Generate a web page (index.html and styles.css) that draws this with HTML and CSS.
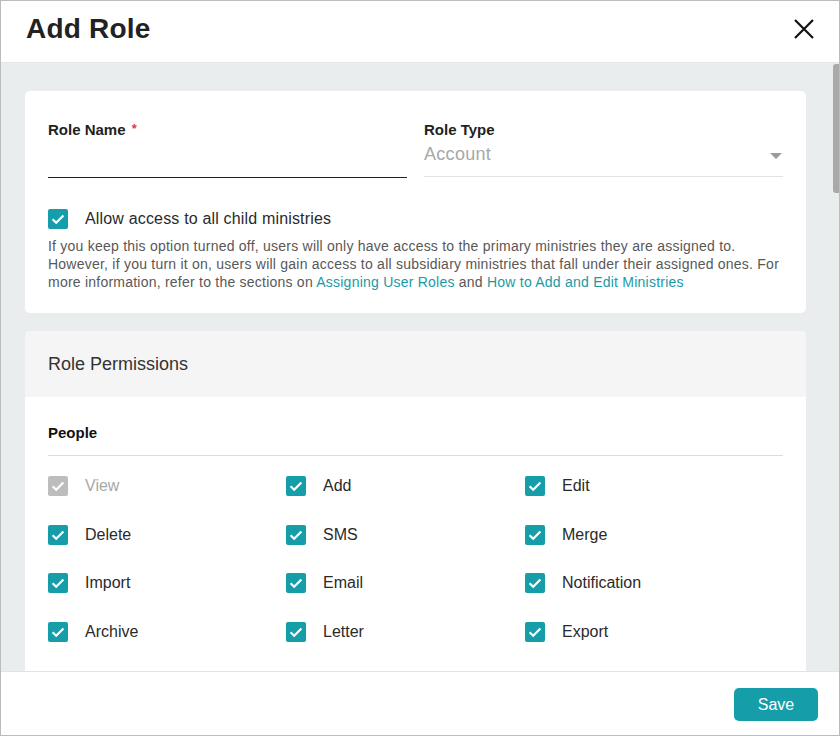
FILE: index.html
```html
<!DOCTYPE html>
<html>
<head>
<meta charset="utf-8">
<link rel="stylesheet" href="styles.css">
</head>
<body>
<div class="dialog">
  <header class="dlg-header">
    <h1 class="dlg-title">Add Role</h1>
    <button class="close-btn" aria-label="Close">
      <svg width="20" height="20" viewBox="0 0 20 20"><path d="M1 1 L19 19 M19 1 L1 19" stroke="#111" stroke-width="2.2" fill="none"/></svg>
    </button>
  </header>
  <main class="dlg-body">
    <div class="scroll-content">
      <section class="card card-role">
        <div class="field-row">
          <div class="field">
            <label class="field-label">Role Name <span class="req">*</span></label>
            <div class="field-input field-input-dark"></div>
          </div>
          <div class="field">
            <label class="field-label">Role Type</label>
            <div class="field-input field-input-light">
              <span class="select-value">Account</span>
              <span class="caret"></span>
            </div>
          </div>
        </div>
        <div class="check-row check-row-main">
          <span class="cb"><svg width="20" height="20" viewBox="0 0 20 20"><rect width="20" height="20" rx="2" fill="#159ea9"/><path d="M4.6 10.3 L8.2 13.8 L15.4 6.4" stroke="#fff" stroke-width="2.2" fill="none"/></svg></span>
          <span class="cb-label main-label">Allow access to all child ministries</span>
        </div>
        <p class="desc">If you keep this option turned off, users will only have access to the primary ministries they are assigned to. However, if you turn it on, users will gain access to all subsidiary ministries that fall under their assigned ones. For more information, refer to the sections on <a class="link">Assigning User Roles</a> and <a class="link">How to Add and Edit Ministries</a></p>
      </section>

      <section class="card card-perm">
        <div class="perm-header">Role Permissions</div>
        <div class="perm-body">
          <div class="perm-group-title">People</div>
          <div class="perm-grid">
            <div class="check-row disabled"><span class="cb"><svg width="20" height="20" viewBox="0 0 20 20"><rect width="20" height="20" rx="2" fill="#bdbdbd"/><path d="M4.6 10.3 L8.2 13.8 L15.4 6.4" stroke="#fff" stroke-width="2.2" fill="none"/></svg></span><span class="cb-label">View</span></div>
            <div class="check-row"><span class="cb"><svg width="20" height="20" viewBox="0 0 20 20"><rect width="20" height="20" rx="2" fill="#159ea9"/><path d="M4.6 10.3 L8.2 13.8 L15.4 6.4" stroke="#fff" stroke-width="2.2" fill="none"/></svg></span><span class="cb-label">Add</span></div>
            <div class="check-row"><span class="cb"><svg width="20" height="20" viewBox="0 0 20 20"><rect width="20" height="20" rx="2" fill="#159ea9"/><path d="M4.6 10.3 L8.2 13.8 L15.4 6.4" stroke="#fff" stroke-width="2.2" fill="none"/></svg></span><span class="cb-label">Edit</span></div>
            <div class="check-row"><span class="cb"><svg width="20" height="20" viewBox="0 0 20 20"><rect width="20" height="20" rx="2" fill="#159ea9"/><path d="M4.6 10.3 L8.2 13.8 L15.4 6.4" stroke="#fff" stroke-width="2.2" fill="none"/></svg></span><span class="cb-label">Delete</span></div>
            <div class="check-row"><span class="cb"><svg width="20" height="20" viewBox="0 0 20 20"><rect width="20" height="20" rx="2" fill="#159ea9"/><path d="M4.6 10.3 L8.2 13.8 L15.4 6.4" stroke="#fff" stroke-width="2.2" fill="none"/></svg></span><span class="cb-label">SMS</span></div>
            <div class="check-row"><span class="cb"><svg width="20" height="20" viewBox="0 0 20 20"><rect width="20" height="20" rx="2" fill="#159ea9"/><path d="M4.6 10.3 L8.2 13.8 L15.4 6.4" stroke="#fff" stroke-width="2.2" fill="none"/></svg></span><span class="cb-label">Merge</span></div>
            <div class="check-row"><span class="cb"><svg width="20" height="20" viewBox="0 0 20 20"><rect width="20" height="20" rx="2" fill="#159ea9"/><path d="M4.6 10.3 L8.2 13.8 L15.4 6.4" stroke="#fff" stroke-width="2.2" fill="none"/></svg></span><span class="cb-label">Import</span></div>
            <div class="check-row"><span class="cb"><svg width="20" height="20" viewBox="0 0 20 20"><rect width="20" height="20" rx="2" fill="#159ea9"/><path d="M4.6 10.3 L8.2 13.8 L15.4 6.4" stroke="#fff" stroke-width="2.2" fill="none"/></svg></span><span class="cb-label">Email</span></div>
            <div class="check-row"><span class="cb"><svg width="20" height="20" viewBox="0 0 20 20"><rect width="20" height="20" rx="2" fill="#159ea9"/><path d="M4.6 10.3 L8.2 13.8 L15.4 6.4" stroke="#fff" stroke-width="2.2" fill="none"/></svg></span><span class="cb-label">Notification</span></div>
            <div class="check-row"><span class="cb"><svg width="20" height="20" viewBox="0 0 20 20"><rect width="20" height="20" rx="2" fill="#159ea9"/><path d="M4.6 10.3 L8.2 13.8 L15.4 6.4" stroke="#fff" stroke-width="2.2" fill="none"/></svg></span><span class="cb-label">Archive</span></div>
            <div class="check-row"><span class="cb"><svg width="20" height="20" viewBox="0 0 20 20"><rect width="20" height="20" rx="2" fill="#159ea9"/><path d="M4.6 10.3 L8.2 13.8 L15.4 6.4" stroke="#fff" stroke-width="2.2" fill="none"/></svg></span><span class="cb-label">Letter</span></div>
            <div class="check-row"><span class="cb"><svg width="20" height="20" viewBox="0 0 20 20"><rect width="20" height="20" rx="2" fill="#159ea9"/><path d="M4.6 10.3 L8.2 13.8 L15.4 6.4" stroke="#fff" stroke-width="2.2" fill="none"/></svg></span><span class="cb-label">Export</span></div>
          </div>
        </div>
      </section>
    </div>
    <div class="scroll-thumb"></div>
  </main>
  <footer class="dlg-footer">
    <button class="save-btn">Save</button>
  </footer>
</div>
</body>
</html>
```
FILE: styles.css
```css
* { box-sizing: border-box; }
html, body { margin: 0; padding: 0; }
body {
  font-family: "Liberation Sans", Arial, sans-serif;
  color: #222;
  background: #fff;
}
.dialog {
  width: 840px;
  height: 736px;
  border: 1px solid #bcbcbc;
  display: flex;
  flex-direction: column;
  background: #fff;
  overflow: hidden;
}
.dlg-header {
  height: 62px;
  flex: 0 0 62px;
  border-bottom: 1px solid #e6e6e6;
  display: flex;
  align-items: center;
  justify-content: space-between;
  padding: 0 25px 0 25px;
}
.dlg-title {
  margin: 0;
  font-size: 28px;
  font-weight: bold;
  color: #222;
  line-height: 32px;
  letter-spacing: 0.2px;
  position: relative;
  top: -3px;
}
.close-btn {
  border: 0;
  background: none;
  padding: 0;
  width: 20px;
  height: 20px;
  display: flex;
  position: relative;
  top: -3px;
}
.dlg-body {
  flex: 1 1 auto;
  background: #e9edee;
  position: relative;
  overflow: hidden;
}
.scroll-content {
  padding: 28px 33px 0 24px;
  display: flex;
  flex-direction: column;
  gap: 18px;
}
.scroll-thumb {
  position: absolute;
  right: 0;
  top: 1px;
  width: 6px;
  height: 129px;
  background: #a9a9a9;
  border-radius: 3px 0 0 3px;
}
.card {
  background: #fff;
  border-radius: 5px;
}
.card-role {
  padding: 30px 23px 22px;
}
.field-row {
  display: flex;
  gap: 17px;
}
.field {
  flex: 1 1 0;
  display: flex;
  flex-direction: column;
}
.field-label {
  font-size: 15px;
  font-weight: bold;
  line-height: 18px;
  color: #222;
}
.req {
  color: #e03c3c;
  font-size: 13px;
  margin-left: 2px;
  position: relative;
  top: -2px;
}
.field-input {
  height: 38px;
  display: flex;
  align-items: flex-end;
  justify-content: space-between;
  padding-bottom: 12px;
}
.field-input-dark { border-bottom: 1px solid #222; }
.field-input-light { border-bottom: 1px solid #e3e3e3; }
.select-value {
  font-size: 18px;
  line-height: 20px;
  color: #a8a8a8;
  letter-spacing: 0.3px;
}
.caret {
  width: 0;
  height: 0;
  border-left: 6px solid transparent;
  border-right: 6px solid transparent;
  border-top: 6px solid #9a9a9a;
  margin-right: 1px;
  margin-bottom: 5px;
}
.check-row {
  display: flex;
  align-items: center;
  gap: 17px;
  height: 20px;
}
.check-row-main { margin-top: 31px; }
.cb { display: flex; width: 20px; height: 20px; flex: 0 0 20px; }
.cb-label {
  font-size: 16px;
  line-height: 20px;
  color: #2a2a2a;
}
.main-label { letter-spacing: 0.17px; }
.disabled .cb-label { color: #a8a8a8; }
.desc {
  margin: 8px 0 0;
  font-size: 14px;
  line-height: 18px;
  color: #585858;
  letter-spacing: 0.23px;
}
.link { color: #1a9aa6; text-decoration: none; }
.card-perm { overflow: hidden; }
.perm-header {
  height: 66px;
  background: #f5f5f5;
  display: flex;
  align-items: center;
  padding: 0 23px;
  font-size: 18px;
  color: #333;
}
.perm-body {
  padding: 27px 23px 40px;
}
.perm-group-title {
  font-size: 15px;
  font-weight: bold;
  line-height: 18px;
  color: #111;
  padding-bottom: 13px;
  border-bottom: 1px solid #dcdcdc;
}
.perm-grid {
  display: grid;
  grid-template-columns: 238px 239px 1fr;
  grid-auto-rows: 20px;
  row-gap: 28.5px;
  padding-top: 20px;
}
.dlg-footer {
  height: 64px;
  flex: 0 0 64px;
  border-top: 1px solid #e3e3e3;
  display: flex;
  align-items: center;
  justify-content: flex-end;
  padding: 2px 21px 0 0;
}
.save-btn {
  width: 84px;
  height: 33px;
  border: 0;
  border-radius: 5px;
  background: #159ea9;
  color: #fff;
  font-family: "Liberation Sans", Arial, sans-serif;
  font-size: 16px;
  padding: 0;
}
```
